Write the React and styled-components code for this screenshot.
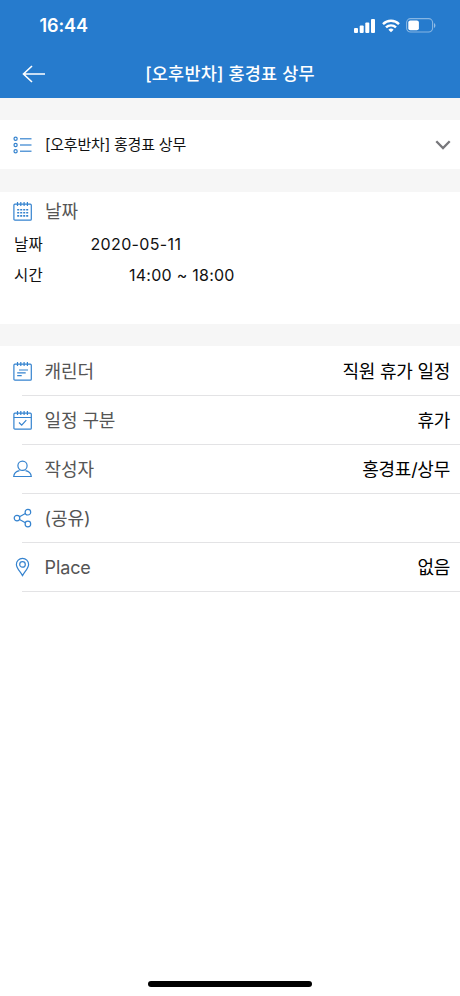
import React from "react";
import styled, { createGlobalStyle } from "styled-components";

const GlobalStyles = createGlobalStyle`
  * {
    box-sizing: border-box;
    margin: 0;
    padding: 0;
  }
  body {
    background: #fff;
    font-family: Inter, "Noto Sans CJK KR", sans-serif;
  }
  svg {
    display: block;
    flex: none;
  }
`;
const Container = styled.div`
  height: 996px;
  display: flex;
  flex-direction: column;
  overflow: hidden;
  color: #111;
`;
const Header = styled.header`
  height: 98px;
  background: #267bcd;
  color: #fff;
`;
const StatusBar = styled.div`
  height: 50px;
  padding: 1px 24px 0 39.5px;
  display: flex;
  align-items: center;
  justify-content: space-between;
`;
const Clock = styled.span`
  font-size: 18px;
  font-weight: 600;
  letter-spacing: -0.1px;
`;
const StatusIcons = styled.div`
  display: flex;
  align-items: center;
  gap: 6.5px;
`;
const TitleBar = styled.div`
  height: 48px;
  padding: 0 22px;
  display: grid;
  grid-template-columns: 24px 1fr 24px;
  align-items: center;
`;
const Title = styled.h1`
  font-size: 17.5px;
  line-height: 24px;
  font-weight: 500;
  text-align: center;
  white-space: nowrap;
  letter-spacing: 0.2px;
`;
const Gap = styled.div`
  height: ${({ $height }) => $height}px;
  flex: none;
  background: #f6f6f6;
`;
const Subject = styled.section`
  height: 49px;
  padding: 1px 9px 0 12px;
  display: flex;
  align-items: center;
`;
const SubjectText = styled.span`
  flex: 1;
  margin-left: 12px;
  font-size: 15px;
  line-height: 20px;
  letter-spacing: -0.2px;
`;
const DateSection = styled.section`
  height: 132px;
  padding: 0 12px;
`;
const DateHead = styled.div`
  height: 37px;
  padding-top: 1px;
  display: flex;
  align-items: center;
  gap: 12px;
`;
const Label = styled.span`
  color: #555;
  font-size: 18px;
  line-height: 24px;
  letter-spacing: -0.1px;
  position: relative;
  top: 1px;
`;
const DateRow = styled.div`
  height: 31px;
  padding-left: 2px;
  display: flex;
  align-items: center;
  font-size: 16px;
  line-height: 22px;
`;
const DateName = styled.span`
  width: ${({ $width }) => $width}px;
  font-size: 15.5px;
  letter-spacing: 0.3px;
`;
const DateValue = styled.span`
  padding-bottom: 1px;
  letter-spacing: ${({ $spacing }) => $spacing || 0}px;
`;
const List = styled.div`
  padding-top: 1px;
`;
const Row = styled.div`
  height: 49px;
  display: flex;
  padding-left: 12px;
`;
const RowIcon = styled.div`
  width: 10px;
  display: flex;
  align-items: center;
`;
const RowBody = styled.div`
  flex: 1;
  padding: 0 10px 0 22.5px;
  display: flex;
  align-items: center;
  justify-content: space-between;
  border-bottom: 1px solid #e3e3e5;
`;
const Value = styled.span`
  padding-top: 2px;
  color: #000;
  font-size: 18px;
  line-height: 24px;
  letter-spacing: -0.25px;
`;
const HomeIndicator = styled.div`
  width: 164px;
  height: 6px;
  margin: auto auto 9px;
  border-radius: 3px;
  background: #000;
`;

const Icon = ({ children }) => (
  <svg
    width="21"
    height="21"
    viewBox="0 0 21 21"
    fill="none"
    stroke="#3583cf"
    strokeWidth="1.2"
  >
    {children}
  </svg>
);
const ListIcon = () => (
  <Icon>
    {[3.8, 10, 16.2].map((y) => (
      <g key={y}>
        <circle cx="3.6" cy={y} r="1.6" />
        <path d={`M8 ${y}h11.5`} />
      </g>
    ))}
  </Icon>
);
const CalendarFrame = ({ children }) => (
  <Icon>
    <rect x="1.9" y="3.2" width="17.4" height="16" rx="1" />
    <path d="M5.5 1v4M8.8 1v4M12.1 1v4M15.4 1v4" />
    {children}
  </Icon>
);
const MonthIcon = () => (
  <CalendarFrame>
    <path
      d="M5.2 8.7h11M5.2 11.8h11M5.2 14.9h11"
      strokeWidth="1.6"
      strokeDasharray="2 1"
    />
  </CalendarFrame>
);
const NoteIcon = () => (
  <CalendarFrame>
    <path d="M7 9h9M5.2 11.8h8.5M5.2 14.6h4.5" />
  </CalendarFrame>
);
const CheckIcon = () => (
  <CalendarFrame>
    <path d="M1.9 7.5h17.4M7 12.5l2.7 2.7 4.6-5" />
  </CalendarFrame>
);
const PersonIcon = () => (
  <Icon>
    <circle cx="10.5" cy="6.8" r="4.6" />
    <path d="M7.5 11.6c-3.4.7-5.5 2.5-5.8 5.9h17.6c-.3-3.4-2.4-5.2-5.8-5.9" />
  </Icon>
);
const ShareIcon = () => (
  <Icon>
    <circle cx="5" cy="10.1" r="2.8" />
    <circle cx="15.9" cy="4.2" r="2.8" />
    <circle cx="15.9" cy="16" r="2.8" />
    <path d="M7.5 8.8l5.9-3.3M7.5 11.4l5.9 3.3" />
  </Icon>
);
const PinIcon = () => (
  <Icon>
    <path d="M10.5 18.6C8.3 14.6 4.4 11.1 4.4 7.4a6.1 6.1 0 0 1 12.2 0c0 3.7-3.9 7.2-6.1 11.2z" />
    <circle cx="10.5" cy="7.4" r="2.8" />
  </Icon>
);
const BackIcon = () => (
  <svg width="24" height="20" viewBox="0 0 24 20" fill="none" stroke="#fff" strokeWidth="1.6">
    <path d="M10 2L1.5 10l8.5 8M1.5 10H23" />
  </svg>
);
const ChevronIcon = () => (
  <svg width="16" height="12" viewBox="0 0 16 12" fill="none" stroke="#77777b" strokeWidth="2.3">
    <path d="M1.3 2.3L8 9l6.7-6.7" />
  </svg>
);
const SignalIcon = () => (
  <svg width="21" height="14" viewBox="0 0 21 14" fill="#fff">
    <rect y="9" width="4" height="5" rx="1" />
    <rect x="5.7" y="6.5" width="4" height="7.5" rx="1" />
    <rect x="11.3" y="3.5" width="4" height="10.5" rx="1" />
    <rect x="17" width="4" height="14" rx="1" />
  </svg>
);
const WifiIcon = () => (
  <svg width="18" height="14" viewBox="0 0 18 14" fill="none" stroke="#fff" strokeWidth="2.4">
    <path d="M1 5.1a11.4 11.4 0 0 1 16 0M4 8.4a7.1 7.1 0 0 1 10 0" />
    <path d="M9 13.3L6.4 10.7a3.7 3.7 0 0 1 5.2 0z" fill="#fff" stroke="none" />
  </svg>
);
const BatteryIcon = () => (
  <svg width="30" height="15" viewBox="0 0 30 15">
    <rect x=".6" y=".6" width="26" height="13.4" rx="4" fill="none" stroke="#fff" strokeOpacity=".45" strokeWidth="1.1" />
    <rect x="2.3" y="2.4" width="10.6" height="9.8" rx="2" fill="#fff" />
    <path d="M28 5v5c1.9-.9 1.9-4.1 0-5z" fill="#fff" fillOpacity=".5" />
  </svg>
);

const rows = [
  { icon: <NoteIcon />, label: "캐린더", value: "직원 휴가 일정" },
  { icon: <CheckIcon />, label: "일정 구분", value: "휴가" },
  { icon: <PersonIcon />, label: "작성자", value: "홍경표/상무" },
  { icon: <ShareIcon />, label: "(공유)" },
  { icon: <PinIcon />, label: "Place", value: "없음" },
];

const App = () => {
  return (
    <>
      <GlobalStyles />
      <Container>
        <Header>
          <StatusBar>
            <Clock>16:44</Clock>
            <StatusIcons>
              <SignalIcon />
              <WifiIcon />
              <BatteryIcon />
            </StatusIcons>
          </StatusBar>
          <TitleBar>
            <BackIcon />
            <Title>[오후반차] 홍경표 상무</Title>
          </TitleBar>
        </Header>
        <Gap $height={22} />
        <Subject>
          <ListIcon />
          <SubjectText>[오후반차] 홍경표 상무</SubjectText>
          <ChevronIcon />
        </Subject>
        <Gap $height={23} />
        <DateSection>
          <DateHead>
            <MonthIcon />
            <Label>날짜</Label>
          </DateHead>
          <DateRow>
            <DateName $width={76.5}>날짜</DateName>
            <DateValue $spacing={0.35}>2020-05-11</DateValue>
          </DateRow>
          <DateRow>
            <DateName $width={115}>시간</DateName>
            <DateValue $spacing={0.25}>14:00 ~ 18:00</DateValue>
          </DateRow>
        </DateSection>
        <Gap $height={22} />
        <List>
          {rows.map(({ icon, label, value }) => (
            <Row key={label}>
              <RowIcon>{icon}</RowIcon>
              <RowBody>
                <Label>{label}</Label>
                {value && <Value>{value}</Value>}
              </RowBody>
            </Row>
          ))}
        </List>
        <HomeIndicator />
      </Container>
    </>
  );
};

export default App;
